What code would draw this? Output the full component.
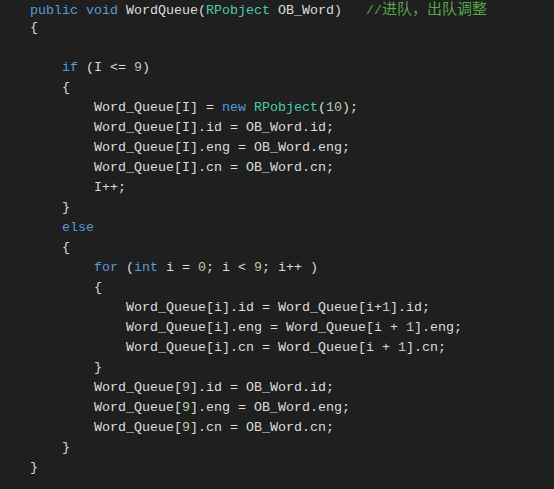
type Tok = [string, string?];

const KW = "text-[#569cd6]";
const TY = "text-[#4ec9b0]";
const NUM = "text-[#b5cea8]";

const lines: Tok[][] = [
  [["public", KW], [" "], ["void", KW], [" WordQueue("], ["RPobject", TY], [" OB_Word)   "]],
  [["{"]],
  [],
  [["    "], ["if", KW], [" (I <= "], ["9", NUM], [")"]],
  [["    {"]],
  [["        Word_Queue[I] = "], ["new", KW], [" "], ["RPobject", TY], ["("], ["10", NUM], [");"]],
  [["        Word_Queue[I].id = OB_Word.id;"]],
  [["        Word_Queue[I].eng = OB_Word.eng;"]],
  [["        Word_Queue[I].cn = OB_Word.cn;"]],
  [["        I++;"]],
  [["    }"]],
  [["    "], ["else", KW]],
  [["    {"]],
  [["        "], ["for", KW], [" ("], ["int", KW], [" i = "], ["0", NUM], ["; i < "], ["9", NUM], ["; i++ )"]],
  [["        {"]],
  [["            Word_Queue[i].id = Word_Queue[i+"], ["1", NUM], ["].id;"]],
  [["            Word_Queue[i].eng = Word_Queue[i + "], ["1", NUM], ["].eng;"]],
  [["            Word_Queue[i].cn = Word_Queue[i + "], ["1", NUM], ["].cn;"]],
  [["        }"]],
  [["        Word_Queue["], ["9", NUM], ["].id = OB_Word.id;"]],
  [["        Word_Queue["], ["9", NUM], ["].eng = OB_Word.eng;"]],
  [["        Word_Queue["], ["9", NUM], ["].cn = OB_Word.cn;"]],
  [["    }"]],
  [["}"]],
];

export default function App() {
  return (
    <div className="h-[489px] w-[554px] overflow-hidden bg-[#1f1f1f] pl-[30px]">
      <div className="-mt-[2px] whitespace-pre font-['Liberation_Mono',monospace] text-[13.33px] leading-[20px] text-[#dcdcdc]">
        {lines.map((toks, i) => (
          <div key={i} className="h-[20px]">
            {toks.map(([t, c], j) => (
              <span key={j} className={c}>
                {t}
              </span>
            ))}
            {i === 0 && (
              <span className="text-[#57a64a]">
                //
                <span className="font-['Noto_Sans_CJK_SC',sans-serif] text-[15px] leading-[20px]">
                  进队，出队调整
                </span>
              </span>
            )}
          </div>
        ))}
      </div>
    </div>
  );
}
